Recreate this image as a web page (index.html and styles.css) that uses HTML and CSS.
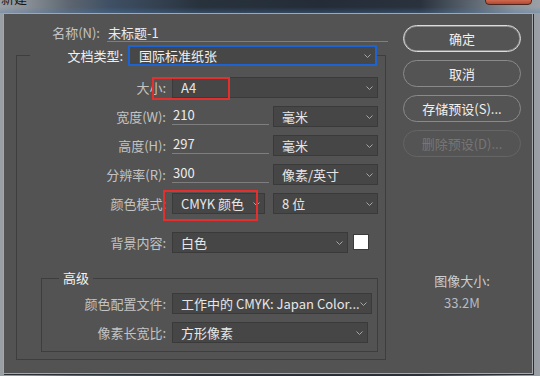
FILE: index.html
```html
<!DOCTYPE html>
<html lang="zh-CN">
<head>
    <meta charset="UTF-8">
    <title>新建</title>
    <link rel="stylesheet" href="styles.css">
</head>
<body>
    <div class="titlebar">
        <span class="title">新建</span>
        <span class="close"></span>
    </div>

    <div class="dialog">
        <div class="main">
            <div class="name-row">
                <label class="label">名称(N):</label>
                <span class="name-input">未标题-1</span>
            </div>

            <fieldset class="group">
                <legend class="doc-legend">
                    <div class="doc-type">
                        <label class="label bright">文档类型:</label>
                        <div class="select focused">
                            <span>国际标准纸张</span>
                            <svg width="7" height="4" viewBox="0 0 7 4"><path d="M0.5 0.5L3.5 3.5L6.5 0.5" fill="none" stroke="#a6a6a6"/></svg>
                        </div>
                    </div>
                </legend>

                <div class="row">
                    <label class="label">大小:</label>
                    <div class="select">
                        <span>A4</span>
                        <svg width="7" height="4" viewBox="0 0 7 4"><path d="M0.5 0.5L3.5 3.5L6.5 0.5" fill="none" stroke="#a6a6a6"/></svg>
                    </div>
                    <span class="mark mark-size"></span>
                </div>

                <div class="row">
                    <label class="label">宽度(W):</label>
                    <div class="pair">
                        <span class="input">210</span>
                        <div class="select unit">
                            <span>毫米</span>
                            <svg width="7" height="4" viewBox="0 0 7 4"><path d="M0.5 0.5L3.5 3.5L6.5 0.5" fill="none" stroke="#a6a6a6"/></svg>
                        </div>
                    </div>
                </div>

                <div class="row">
                    <label class="label">高度(H):</label>
                    <div class="pair">
                        <span class="input">297</span>
                        <div class="select unit">
                            <span>毫米</span>
                            <svg width="7" height="4" viewBox="0 0 7 4"><path d="M0.5 0.5L3.5 3.5L6.5 0.5" fill="none" stroke="#a6a6a6"/></svg>
                        </div>
                    </div>
                </div>

                <div class="row">
                    <label class="label">分辨率(R):</label>
                    <div class="pair">
                        <span class="input">300</span>
                        <div class="select unit">
                            <span>像素/英寸</span>
                            <svg width="7" height="4" viewBox="0 0 7 4"><path d="M0.5 0.5L3.5 3.5L6.5 0.5" fill="none" stroke="#a6a6a6"/></svg>
                        </div>
                    </div>
                </div>

                <div class="row">
                    <label class="label">颜色模式:</label>
                    <div class="pair">
                        <div class="select mode">
                            <span>CMYK 颜色</span>
                            <svg width="7" height="4" viewBox="0 0 7 4"><path d="M0.5 0.5L3.5 3.5L6.5 0.5" fill="none" stroke="#a6a6a6"/></svg>
                        </div>
                        <div class="select unit">
                            <span>8 位</span>
                            <svg width="7" height="4" viewBox="0 0 7 4"><path d="M0.5 0.5L3.5 3.5L6.5 0.5" fill="none" stroke="#a6a6a6"/></svg>
                        </div>
                    </div>
                    <span class="mark mark-mode"></span>
                </div>

                <div class="row bg-row">
                    <label class="label">背景内容:</label>
                    <div class="pair">
                        <div class="select bg">
                            <span>白色</span>
                            <svg width="7" height="4" viewBox="0 0 7 4"><path d="M0.5 0.5L3.5 3.5L6.5 0.5" fill="none" stroke="#a6a6a6"/></svg>
                        </div>
                        <span class="swatch"></span>
                    </div>
                </div>

                <fieldset class="advanced">
                    <legend class="adv-legend">高级</legend>

                    <div class="row">
                        <label class="label">颜色配置文件:</label>
                        <div class="select">
                            <span>工作中的 CMYK: Japan Color...</span>
                            <svg width="7" height="4" viewBox="0 0 7 4"><path d="M0.5 0.5L3.5 3.5L6.5 0.5" fill="none" stroke="#a6a6a6"/></svg>
                        </div>
                    </div>

                    <div class="row">
                        <label class="label">像素长宽比:</label>
                        <div class="select">
                            <span>方形像素</span>
                            <svg width="7" height="4" viewBox="0 0 7 4"><path d="M0.5 0.5L3.5 3.5L6.5 0.5" fill="none" stroke="#a6a6a6"/></svg>
                        </div>
                    </div>
                </fieldset>
            </fieldset>
        </div>

        <div class="side">
            <div class="buttons">
                <button class="btn primary">确定</button>
                <button class="btn">取消</button>
                <button class="btn">存储预设(S)...</button>
                <button class="btn" disabled>删除预设(D)...</button>
            </div>
            <div class="size-info">
                <div class="size-label">图像大小:</div>
                <div class="size-value">33.2M</div>
            </div>
        </div>
    </div>
</body>
</html>
```

FILE: styles.css
```css
* {
    box-sizing: border-box;
}
body {
    margin: 0;
    width: 540px;
    height: 376px;
    overflow: hidden;
    font-family: "Noto Sans CJK SC", "Liberation Sans", sans-serif;
    font-size: 13px;
    color: #e6e6e6;
    background: linear-gradient(to right, #9ba0a5 0, #8b9197 25px, #5c6570 70px, #3f5064 110px, #33404f 160px, #28323d 200px, #242d37 320px, #2a333d 420px, #5f6973 475px, #8e959b 515px, #9aa0a5 540px);
}
.titlebar {
    height: 13px;
    display: flex;
    justify-content: space-between;
    overflow: hidden;
    background: linear-gradient(to bottom, rgba(0, 0, 0, 0) 55%, rgba(74, 122, 180, 0.35) 100%);
}
.title {
    margin: -10px 0 0 1px;
    line-height: 16px;
    color: #161616;
}
.close {
    width: 47px;
    height: 6px;
    margin: -1px 8px 0 0;
    border: 1px solid #4a2720;
    border-radius: 0 0 4px 4px;
    background: linear-gradient(#cf6a50, #b4472f);
}

/* dialog body */
.dialog {
    display: flex;
    margin-left: 3px;
    width: 530px;
    height: 361px;
    background: #535353;
    border: 1px solid #a4a8ac;
    box-shadow: 1px 1px 0 #2b3036;
}
.main {
    width: 384px;
}
.label {
    text-align: right;
    color: #c3c3c3;
    white-space: nowrap;
}
.label.bright {
    color: #f0f0f0;
}
.name-row {
    display: grid;
    grid-template-columns: 60px 281px;
    column-gap: 7px;
    margin: 10px 0 0 36px;
    line-height: 17px;
}
.name-input {
    height: 18px;
    padding-left: 1px;
    color: #ececec;
    border-bottom: 1px solid #7e7e7e;
}

/* group boxes */
.group {
    margin: 3px 0 0 12px;
    width: 370px;
    min-width: 0;
    padding: 11px 7px 7px 0;
    border: 1px solid #3e3e3e;
}
.doc-legend {
    margin-left: 13px;
    padding: 0;
}
.doc-type {
    display: flex;
    align-items: center;
    line-height: 21px;
}
.doc-type .label {
    width: 93px;
    margin-right: 5px;
}
.doc-type .select {
    width: 249px;
}
.row {
    position: relative;
    display: grid;
    grid-template-columns: 149px 1fr;
    column-gap: 6px;
    align-items: center;
    height: 21px;
}
.row + .row {
    margin-top: 8px;
}
.row.bg-row {
    margin-top: 18px;
}
.advanced {
    margin: 16px 0 0 24px;
    width: 337px;
    min-width: 0;
    padding: 6px 9px 8px 0;
    border: 1px solid #3e3e3e;
}
.adv-legend {
    margin-left: 17px;
    padding: 0 4px;
    line-height: 18px;
    color: #f2f2f2;
}
.advanced .row {
    grid-template-columns: 124px 1fr;
}

/* controls */
.select {
    display: flex;
    align-items: center;
    justify-content: space-between;
    height: 21px;
    padding: 0 4px 0 8px;
    line-height: 19px;
    color: #e6e6e6;
    background: #464646;
    border: 1px solid #3a3a3a;
    white-space: nowrap;
}
.select svg {
    flex: none;
}
.select.focused {
    padding-left: 9px;
    border: 2px solid #1d63d1;
    background: #474747;
    color: #f0f0f0;
}
.pair {
    display: flex;
    align-items: flex-start;
    justify-content: space-between;
    height: 21px;
}
.input {
    width: 97px;
    height: 19px;
    padding-left: 1px;
    line-height: 18px;
    color: #ececec;
    border-bottom: 1px solid #7e7e7e;
}
.select.unit {
    width: 105px;
}
.select.mode {
    width: 93px;
}
.select.bg {
    width: 176px;
}
.swatch {
    width: 16px;
    height: 16px;
    margin: 2px 9px 0 0;
    background: #ffffff;
    border: 1px solid #3a3a3a;
}

/* red annotation boxes */
.mark {
    position: absolute;
    border: 2px solid #e3302e;
    pointer-events: none;
}
.mark-size {
    left: 135px;
    top: 0;
    width: 78px;
    height: 23px;
}
.mark-mode {
    left: 146px;
    top: -3px;
    width: 95px;
    height: 31px;
}

/* right column */
.side {
    width: 118px;
    margin-left: 15px;
    padding-top: 11px;
}
.buttons {
    display: flex;
    flex-direction: column;
    gap: 8px;
}
.btn {
    height: 27px;
    padding: 0;
    font-family: inherit;
    font-size: 13px;
    color: #f0f0f0;
    background: #545454;
    border: 1px solid #8a8a8a;
    border-radius: 14px;
}
.btn.primary {
    border-color: #dcdcdc;
    box-shadow: inset 0 0 0 1px #8c8c8c;
}
.btn:disabled {
    color: #767676;
    border-color: #656565;
}
.size-info {
    margin-top: 116px;
    text-align: center;
    line-height: 16px;
}
.size-label {
    color: #cdcdcd;
}
.size-value {
    margin-top: 6px;
    color: #b6bbc4;
}
```
